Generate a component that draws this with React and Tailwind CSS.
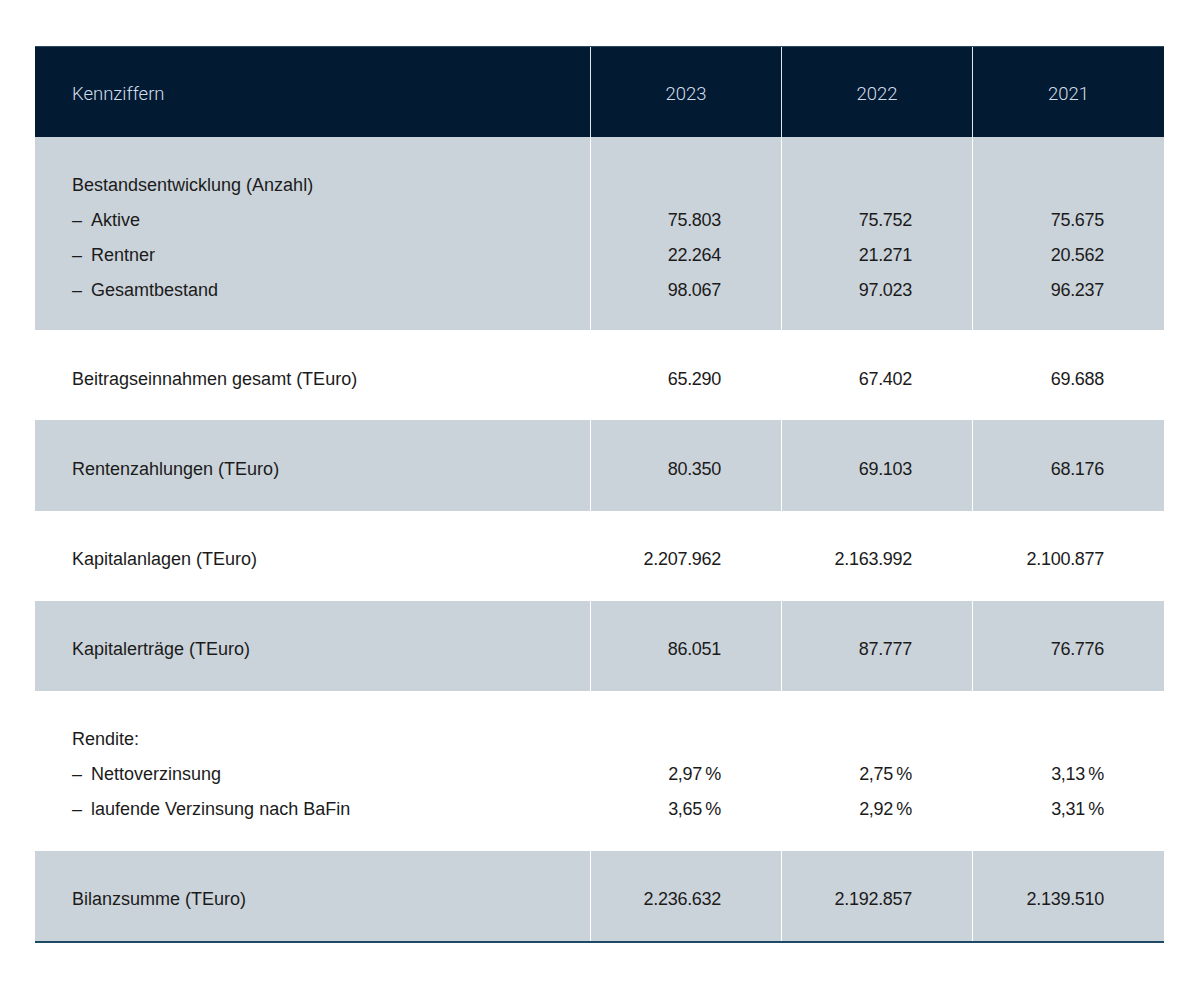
import React from 'react';

const rows = [
  {
    shade: true,
    h: 'h-[193px]',
    pad: 'pt-[9px]',
    lines: [
      { label: 'Bestandsentwicklung (Anzahl)', values: ['', '', ''] },
      { label: 'Aktive', dash: true, values: ['75.803', '75.752', '75.675'] },
      { label: 'Rentner', dash: true, values: ['22.264', '21.271', '20.562'] },
      { label: 'Gesamtbestand', dash: true, values: ['98.067', '97.023', '96.237'] },
    ],
  },
  { shade: false, h: 'h-[90px]', pad: 'pt-[8px]', lines: [{ label: 'Beitragseinnahmen gesamt (TEuro)', values: ['65.290', '67.402', '69.688'] }] },
  { shade: true, h: 'h-[91px]', pad: 'pt-[7px]', lines: [{ label: 'Rentenzahlungen (TEuro)', values: ['80.350', '69.103', '68.176'] }] },
  { shade: false, h: 'h-[90px]', pad: 'pt-[7px]', lines: [{ label: 'Kapitalanlagen (TEuro)', values: ['2.207.962', '2.163.992', '2.100.877'] }] },
  { shade: true, h: 'h-[90px]', pad: 'pt-[7px]', lines: [{ label: 'Kapitalerträge (TEuro)', values: ['86.051', '87.777', '76.776'] }] },
  {
    shade: false,
    h: 'h-[160px]',
    pad: 'pt-[6px]',
    lines: [
      { label: 'Rendite:', values: ['', '', ''] },
      { label: 'Nettoverzinsung', dash: true, values: ['2,97\u2009%', '2,75\u2009%', '3,13\u2009%'] },
      { label: 'laufende Verzinsung nach BaFin', dash: true, values: ['3,65\u2009%', '2,92\u2009%', '3,31\u2009%'] },
    ],
  },
  { shade: true, h: 'h-[90px]', pad: 'pt-[7px]', lines: [{ label: 'Bilanzsumme (TEuro)', values: ['2.236.632', '2.192.857', '2.139.510'] }] },
];

const Label = ({ line }) => (
  <div className="h-[35px] flex items-center">
    {line.dash && <span className="inline-block w-[19px]">–</span>}
    <span>{line.label}</span>
  </div>
);

const App = () => {
  return (
    <div className="w-[1200px] h-[989px] bg-white pt-[46px] px-[35px]" style={{ fontFamily: '"Liberation Sans", Arial, sans-serif' }}>
      <div className="w-[1129px] border-b-2 border-[#1f4a66]">
        {/* header */}
        <div className="grid grid-cols-[555px_191px_191px_192px] h-[91px] bg-[#021a32] border-t border-[#2a4a60] text-[#d2deea] text-[18.5px] font-light" style={{ fontFamily: 'Roboto, "Liberation Sans", sans-serif' }}>
          <div className="flex items-center pl-[37px] pt-[6px]">Kennziffern</div>
          {['2023', '2022', '2021'].map(y => (
            <div key={y} className="flex items-center justify-center pt-[6px] border-l border-[#dfe6ec]">{y}</div>
          ))}
        </div>

        {rows.map((row, i) => (
          <div key={i} className={`grid grid-cols-[555px_191px_191px_192px] ${row.h} ${row.shade ? 'bg-[#cbd3da]' : 'bg-white'} text-[18px] text-[#1b1b1b]`}>
            <div className={`flex flex-col justify-center pl-[37px] ${row.pad}`}>
              {row.lines.map((l, j) => <Label key={j} line={l} />)}
            </div>
            {[0, 1, 2].map(c => (
              <div key={c} className={`flex flex-col justify-center items-end pr-[60px] border-l border-white tracking-[-0.3px] ${row.pad}`}>
                {row.lines.map((l, j) => (
                  <div key={j} className="h-[35px] flex items-center">{l.values[c]}</div>
                ))}
              </div>
            ))}
          </div>
        ))}
      </div>
    </div>
  );
};

export default App;
